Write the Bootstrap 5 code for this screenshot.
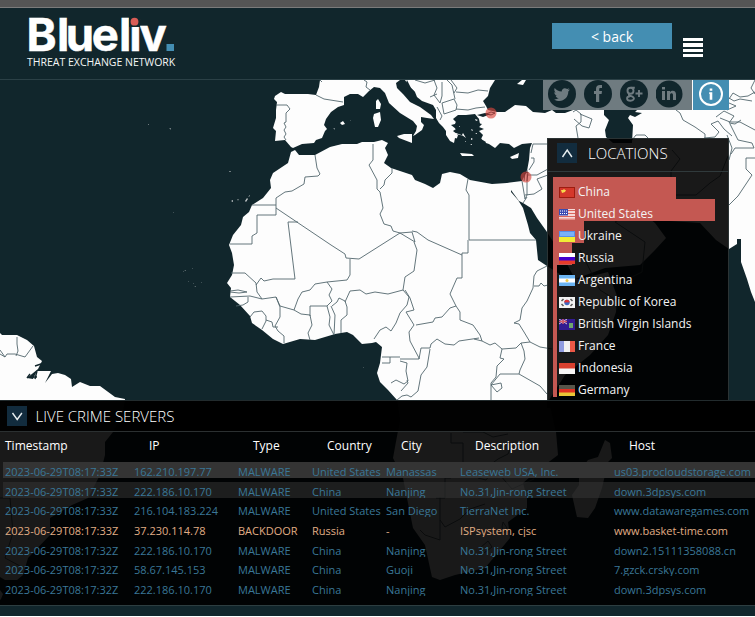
<!DOCTYPE html>
<html lang="en">
<head>
<meta charset="utf-8">
<title>Blueliv - Threat Exchange Network</title>
<meta name="viewport" content="width=device-width, initial-scale=1">
<link href="https://cdn.jsdelivr.net/npm/bootstrap@5.3.0/dist/css/bootstrap.min.css" rel="stylesheet">
<style>
body{font-family:"Open Sans","Noto Sans",sans-serif;background:#fff;color:#fff;overflow:hidden;line-height:1}
.page{height:616px;background:#11262c}
.topline{height:8px;background:#555;border-bottom:1px solid #7b7b7b}
.site-head{height:72px;border-bottom:1px solid #2b4046;padding-left:27px}
.logo-block{padding-top:7px;width:150px}
.logo-block svg{overflow:visible}
.tagline{font-size:10.5px;line-height:13px;white-space:nowrap;margin-top:1px;color:#f4f6f6}
.back-btn{width:120px;height:26px;margin-top:15px;background:#448eb2;color:#fff;font-size:14px;line-height:25px;border-radius:0;padding:0;border:0}
.burger{width:20px;margin:30px 52px 0 11px;gap:2px}
.burger span{height:3.3px;background:#fff}
.stage{height:526px;overflow:hidden;border-bottom:1px solid #2d3e41}
.world{left:0;top:0}
.share{left:543px;top:0;height:30px}
.share-set{width:149px;background:#6f7b80;padding-left:5px;gap:8px}
.share-info{width:36px;margin-left:1px;background:#448eb2}
.loc-panel{left:547px;top:58px;width:182px;height:270px;background:rgba(0,0,0,.9);border:1px solid #2b3334}
.loc-head{height:33px;border-bottom:1px solid #303a3c;padding-left:9px}
.fold{width:20px;height:20px;background:#122c3e}
.panel-title{font-size:15px;font-weight:300;white-space:nowrap}
.loc-head .panel-title{margin:7px 0 0 11px}
.live-head .panel-title{margin-left:8.5px}
.loc-list{padding:5px 0 0 5px}
.loc-row{height:22px;position:relative}
.loc-bar{position:absolute;left:0;top:0;height:22px;background:#c45852}
.loc-text{position:relative;height:22px;padding-left:6px;gap:3px;font-size:12px;white-space:nowrap;padding-top:6px;color:#f4f4f4}
.loc-text svg{margin-top:4px}
.loc-text span{line-height:17px}
.live{left:0;top:320px;width:100%;height:205px;background:rgba(0,0,0,.9);border-top:1px solid #222b2d}
.live-head{height:31px;border-bottom:1px solid #2b3031;background:rgba(0,0,0,.92);padding-left:7px}
.cols{display:grid;grid-template-columns:129px 104px 74px 74px 74px 154px 1fr;padding-left:5px;white-space:nowrap}
.live-cols{height:30px;font-size:12px;line-height:28px}
.live-cols span:not(:first-child){padding-left:15px}
.feed{gap:3.7px}
.feed .cols{height:16px;margin-left:3px;padding-left:2px;font-size:11px;line-height:20px;overflow:hidden;color:#3a7797}
.feed .fresh{background:#343434}
.feed .recent{background:rgba(52,52,52,.55)}
.feed .backdoor{color:#e0ad84}
</style>
<script src="https://cdn.jsdelivr.net/npm/bootstrap@5.3.0/dist/js/bootstrap.bundle.min.js"></script>
</head>
<body>
<div class="page">
<div class="topline"></div>
<header class="site-head d-flex align-items-start">
  <div class="logo-block">
    <svg class="d-block" width="150" height="40" viewBox="27 15 150 40">
      <text y="51" x="26.600 57 65.800 91.700 119 129.300 139.400" font-family="Inter,sans-serif" font-weight="700" font-size="45.500" fill="#fff" stroke="#fff" stroke-width=".5">Blueliv</text>
      <rect x="129" y="14" width="11" height="13" fill="#11262c"/>
      <circle cx="134.500" cy="21.700" r="3.900" fill="#d85c56"/>
      <rect x="166.500" y="44" width="7.500" height="7" fill="#448eb2"/>
    </svg>
    <div class="tagline">THREAT EXCHANGE NETWORK</div>
  </div>
  <button class="btn back-btn ms-auto">&lt; back</button>
  <div class="burger d-flex flex-column"><span></span><span></span><span></span><span></span></div>
</header>
<main class="stage position-relative">
  <svg class="world position-absolute" width="755" height="526" viewBox="0 80 755 526">
    <g fill="#fdfdfd">
      <!-- Europe, Asia and Africa -->
      <path d="M320 80L319 87 316 95 308 94 295 94 285 94 281 92 275 96 274 99 277 102 276 110 276 118 273 128 276 131 275 141 285 140 291 147 293 148 302 144 314 143 316 140 322 138 325 131 327 129 324 125 326 119 331 112 338 107 344 105 344 97 350 94 358 94 363 97 369 91 374 87 380 88 385 93 389 103 400 113 413 121 417 126 416 131 413 136 415 135 422 130 424 125 421 122 421 117 427 118 434 119 431 115 420 107 410 102 403 94 397 88 396 83 400 80H405L409 86 415 92 417 97 422 101 433 105 436 110 436 118 439 123 443 127 446 131 446 135 450 141 454 143 455 138 459 139 460 134 455 128 456 122 453 119 458 115 466 115 475 114 479 119 480 124 478 130 480 136 483 142 489 144 495 148 500 143 509 144 514 148 522 144 532 143 530 148 529 160 527 171 522 181 507 183 492 184 470 180 460 174 450 172 442 174 440 183 433 188 425 184 415 180 412 175 400 171 391 168 384 163 388 155 385 148 388 143 382 140 374 142 362 142 357 144 342 144 330 147 315 155 299 155 295 150 291 152 288 163 273 173 270 180 271 188 263 198 252 205 249 212 243 217 241 225 233 235 229 245 232 253 234 265 232 275 227 283 231 288 230 297 240 305 250 316 252 323 262 330 273 339 283 344 300 339 315 340 335 334 347 332 353 335 362 344 372 343 376 342 382 347 380 363 377 373 380 382 388 390 397 400 400 420 393 458 403 478 413 528 425 545 430 568 432 577 440 580 455 575 485 568 500 550 510 538 508 522 527 508 527 498 523 483 538 470 558 455 556 432 549 400 565 375 590 355 608 335 616 312 617 296 608 272 580 279 566 278 547 266 538 260 536 240 530 233 528 225 523 208 518 200 511 192 511 190 519 201 523 203 531 208 537 218 547 232 566 262 575 279 605 268 640 265 655 250 666 238 655 223 646 216 632 216 615 222 625 207 655 220 700 223 716 240 729 249 737 244 737 239 741 239 741 262 747 279 751 292 755 302V80Z"/>
      <path d="M376 101L378 99 381 104 380 109 376 109ZM374 114L380 112 381 120 378 127 375 127 373 118ZM397 136L404 134 412 134 412 143 399 138ZM460 153L472 154 474 156 462 156ZM510 157L519 153 518 158 512 159ZM340 123L343 121 345 124 342 125Z"/>
      <!-- South America -->
      <path d="M0 333L2 335 17 335 27 340 34 346 37 357 42 361 38 369 27 378 33 379 37 371 51 371 45 383 52 374 58 373 65 375 71 379 72 387 80 382 90 386 100 386 115 397 125 399 123 415 113 432 105 442 105 455 100 475 88 498 72 505 50 518 50 535 28 558 23 575 17 580 5 580 0 577Z"/>
      <!-- Madagascar -->
      <path d="M605 440L610 443 612 458 608 462 602 488 595 508 588 518 577 517 572 495 579 485 579 472 588 460 598 457Z"/>
      <path d="M0 590l3 4-2 5-1 1z"/>
      <path d="M231 201l2-1v2zM245 201l2-3 1 1-2 3zM248 197l2-2v1z" opacity=".75"/>
      <path d="M192 268h1v1zM183 271h1v1zM188 281l1 1h-1zM193 283h1v1zM173 212h1v1zM184 270h2v1zM194 286h2v1zM201 282h1v1zM363 367h1v1zM237 199l2 0-1 2zM229 171l2 0v1h-2zM333 128h2v2zM350 120h1v1zM169 128l2 0 0 2zM148 124h1v1h-1z" opacity=".4"/>
    </g>
    <g fill="#11262c">
      <path d="M495 80H545L600 80V100L565 113 556 113 552 110 545 113 533 112 526 106 515 105 505 112 497 112 488 110 486 106 483 101 488 96 490 88Z"/>
      <path d="M477 115l8-2 6 1-8 3zM604 109H638L635 112 642 113 635 117 630 115 628 118 633 125 632 143 613 143 606 137 605 130 609 120 604 115Z"/>
      <path d="M407 80l4 8 4 4-3-1-6-8zM513 80l6 0 3 3-5 2z"/>
      <path d="M458 117l6-2 2 3 3-3 6 2 4 2-1 4 4 1-3 3 5 2-5 2 4 4-2 4 5 3-2 4-10 6-14-3-4-8 2-6-5-4 3-2-5-4 4-1z"/>
    </g>
    <path d="M517 84l5-4h4l-3 5zM447 132l9 1 8 3-8-2zM463 133l3 5-4-3zM475 119l3 1-2 1zM471 129l2 1-1 1zM471 138l2 1-2 1zM459 126h1v1zM470 144h2v1zM465 141h1v1zM475 133h2v1z" fill="#fdfdfd"/>
    <!-- Borders -->
    <g fill="none" stroke="#52676d" stroke-width=".9" stroke-linejoin="round">
      <path d="M316 95L324 99 343 102M276 105L287 105 290 109 286 113 286 122 284 123 286 127 284 130 286 134 284 137 286 140M364 80l3 2-1 5 4 3M320 80l2 2"/>
      <path d="M315 155L317 168 320 174 318 176 305 177 304 184 292 191 285 192 276 198 276 215 257 215 257 233 252 236 252 244 230 244M252 205H276M276 208L331 245M331 245L345 254 346 258 359 259 400 233 415 242 412 232 400 233 393 231 391 226 384 224 380 214 383 208 380 192 377 189 377 180 369 165 373 160 373 144M392 168V173L385 180 384 185 380 189"/>
      <path d="M288 222H298M288 222L295 279 273 279M231 273L245 273 256 283 257 292 262 299 276 297 280 306 294 310 298 299 302 292 310 290 315 284 327 282 347 280 350 275 350 259M273 279L264 281 261 278 256 285M230 297L250 296 262 299M230 291l8-1 9 2-8 1-9-1M248 297l0 5-5 3-7 1M276 297l4 10 0 10-5 9 3 5 6 5V343M250 317L254 312 262 311 266 316 266 321 262 329M266 320l6 2 1 5 5 0M294 310L301 314 310 315 312 325 308 333 310 340M310 316V306H327L332 301 329 295 332 289 327 282M327 306L330 317 329 325 334 335M331 306L335 315 334 335M332 306l5-4 2-4 6 3 2 6 0 8-6 5V333"/>
      <path d="M345 302L350 291 360 290 366 294 375 292 388 294 403 290 405 277 414 271 417 250 414 242M405 290l5 8 4 12-8 2 8 13-5 7 1 9 9 17V359H400M382 357H400M390 357V363H382M403 290l6 7-2 8-7 8-4 10-5 8-5-4-6 3-6 9M400 361l7 2-1 8 2 10-4 3-8-4-5 3M407 380l1 3-7 8M397 400l5-4 5-1 4 2 7-6 3-16 6-8 3-18"/>
      <path d="M416 325L433 322 435 318 442 317 450 308 456 306 450 294 457 278 462 278V253H468V240"/>
      <path d="M419 359l2-11 9 0 1-4 6-5 8 5 9 1 5-4 20-3M456 306L460 312 460 320 473 325 480 335 482 341 490 345 495 343 502 349 500 358 504 359 497 366 496 377 491 383 491 400M482 341l-8-2M412 231L417 232 428 240 462 255M468 179L466 190 469 195V240H536M502 349L516 348 521 343 524 351 525 359 520 370 519 374H500L491 385 501 383 502 388 497 392 491 385M519 374L540 386 547 394M521 343L530 342 540 347 552 349M530 342L524 332 519 324 514 323 520 320 522 308 527 301 533 288 534 276 537 271 547 266M534 286l5 0 2-3 3 3 4-1"/>
      <path d="M434 80l3 8-3 7 6 8 2-7 0-14M442 103l12-4 3 6-1 5-12 4-2-11M455 99l-3-14-5-5M456 92l12 1 10-3 10 1M456 109l12 1 8-2 9-1M430 97l7-3M415 80l10 3 10-3M451 80l6 8-3 5M437 107l5 9-2 4"/>
      <path d="M531 153l2-9h15M529 170l5-8 0-4-3 0M522 181l3 18 2-4 0-25M525 195l9-1 8-5-5-10 11-4M527 175l10 0 11-6M523 203l4-6M573 112l3-2 5 4 0 8-5 4 2 12M580 114l12 5-3 9-7-2-8-7M570 106l5-6 5 5M676 110l4 3 3 7 12 7 10 7 0 4M704 138l11-1 4-5-8-8 7-3 6 8 8 7M632 140l4-5 9 0 3 3M720 118l10 4 10 0 15 8M729 98l5 3 6-2 12 2M716 117l8-6 10 5-5 7 6 1 6-4M730 124l8 16 14 3 2 5-19 0-4 6M755 158H746V169L752 175 738 196 729 205M727 110l9-4-7-3M727 135l5 13-3 12M640 134M672 150l8 9-9 12 0 24 25 0 14-12 10-7 8-20M755 80l-4 8 4 6M729 99l4-6 7 4 8-1 7-4"/>
      <path d="M17 337l0 7 1 7-2 5M0 350l5 7 2-3 8 0 10 3 8-11M5 357l-5-3"/>
      <path stroke="#11262c" d="M35 366l6-2 3 6M33 377l4 0M30 374l-3 4M37 371l-2 8" stroke-width="1.400"/>
      <path d="M451 433v10h12v25h-12v10h-6v20l-9 0M463 432h20l10 5 15-3M463 468l15 6 20-15 10-5 5-12M478 478l8 2 8-10M440 497l0 43-15-5-5-5M440 520l5 7 15-8 10-10 15-5M503 522l4 6-3 5-2-6zM480 548l8-7 4 6-8 6zM500 475l12 14 22-10M0 498h10l3 35-8 25 15 8M615 222l30 20-3 30-20 10M580 250l20 40 16 10"/>
    </g>
    <circle cx="491" cy="113" r="5.500" fill="#d9463d" fill-opacity=".65"/>
    <circle cx="526" cy="177" r="5.500" fill="#d9463d" fill-opacity=".65"/>
    <path d="M486 114l5-2 4 1-4 2zM524 181l1-8 3-1-1 9" fill="none" stroke="#7c2d2c" stroke-width=".8"/>
  </svg>

  <div class="share position-absolute d-flex">
    <div class="share-set d-flex align-items-start">
      <svg width="28" height="28" viewBox="0 0 28 28"><circle cx="14" cy="14" r="14" fill="#11262c"/><path fill="#6f7b80" d="M22 9.500l-2 .6 1.300-1.800-2.200.8c-2-2-5.500-.8-5.400 2.500-3 0-5.200-1.600-7-3.600-.9 1.700-.3 3.600 1.100 4.600l-1.500-.4c0 1.700 1.200 3 2.800 3.500l-1.500 0c.4 1.300 1.700 2.300 3.200 2.400-1.400 1-3 1.400-4.700 1.300 6.800 3.900 14.200-.2 14.200-7.800z"/></svg>
      <svg width="28" height="28" viewBox="0 0 28 28"><circle cx="14" cy="14" r="14" fill="#11262c"/><path fill="#6f7b80" d="M12 22v-8h-2v-3h2V9c0-2.700 1.300-4 4-4h2v3h-1.500c-1 0-1.300.4-1.300 1.300V11H18l-.4 3h-2.400v8z"/></svg>
      <svg width="28" height="28" viewBox="0 0 28 28"><circle cx="14" cy="14" r="14" fill="#11262c"/><g fill="none" stroke="#6f7b80" stroke-width="1.900"><circle cx="10.500" cy="10.700" r="3"/><path d="M14.800 7.700h-4M9.500 13.700c-1.500 1.500 0 2 1.800 2.500 4.500 1.500 2.500 4.500-.8 4.500-4.500 0-4.500-4-.5-4.500M15.500 13.500h7M19 10v7"/></g></svg>
      <svg width="28" height="28" viewBox="0 0 28 28"><circle cx="13" cy="14" r="13.500" fill="#11262c"/><path fill="#6f7b80" d="M6 11h3v9H6zM6 7h3v2.500H6zM11 11h3v1.300c1.800-2.500 6-1.800 6 2V20h-3v-5c0-2.300-3-2.200-3 0v5h-3z"/></svg>
    </div>
    <div class="share-info d-flex justify-content-center">
      <svg width="26" height="28" viewBox="0 0 26 28"><circle cx="13" cy="14" r="11" fill="none" stroke="#fff" stroke-width="2"/><path fill="#fff" d="M11.700 8.500h2.600v2.300h-2.600zM11.200 12.300h3.100v7.500h-2.600v-5.700h-.5z"/></svg>
    </div>
  </div>

  <section class="loc-panel position-absolute">
    <div class="loc-head d-flex align-items-start">
      <span class="fold d-inline-flex mt-1 pt-1"><svg width="20" height="14" viewBox="0 0 20 14"><path d="M5.500 10l4.700-7 4.700 7" fill="none" stroke="#e8eef0" stroke-width="1.400"/></svg></span>
      <span class="panel-title">LOCATIONS</span>
    </div>
    <div class="loc-list">
      <div class="loc-row"><div class="loc-bar" style="width:123px"></div><div class="loc-text d-flex"><svg width="16" height="11"><rect width="16" height="11" fill="#9e1c10"/><rect x="1" y="1" width="14" height="9" fill="#d5382b"/><path d="M2 3h2l1-1 1 1h1l-1 2-3 1z" fill="#f7d94c"/></svg><span>China</span></div></div>
      <div class="loc-row"><div class="loc-bar" style="width:162px"></div><div class="loc-text d-flex"><svg width="16" height="11"><rect width="16" height="11" fill="#fff"/><path d="M0 1.500h16M0 4.500h16M0 7.500h16M0 10.200h16" stroke="#d9655b" stroke-width="1.300"/><rect width="9" height="6.500" fill="#3a4bb2"/><path d="M1 2h8M1 4.500h8" stroke="#fff" stroke-dasharray="1 1"/></svg><span>United States</span></div></div>
      <div class="loc-row"><div class="loc-bar" style="width:31px"></div><div class="loc-text d-flex"><svg width="16" height="11"><rect width="16" height="11" fill="#568eea"/><rect x="1" y="1" width="14" height="4" fill="#79b1fa"/><rect y="6" width="16" height="5" fill="#f1ec36"/></svg><span>Ukraine</span></div></div>
      <div class="loc-row"><div class="loc-bar" style="width:19px"></div><div class="loc-text d-flex"><svg width="16" height="11"><rect width="16" height="4" fill="#fff"/><rect y="4" width="16" height="4" fill="#4400ce"/><rect y="7.500" width="16" height="3.500" fill="#e63b2b"/></svg><span>Russia</span></div></div>
      <div class="loc-row"><div class="loc-bar" style="width:4px"></div><div class="loc-text d-flex"><svg width="16" height="11"><rect width="16" height="11" fill="#6bb4f2"/><rect y="3.500" width="16" height="4" fill="#fff"/><circle cx="8" cy="5.500" r="1.500" fill="#f1cb48"/></svg><span>Argentina</span></div></div>
      <div class="loc-row"><div class="loc-bar" style="width:4px"></div><div class="loc-text d-flex"><svg width="16" height="11"><rect width="16" height="11" fill="#f3f3f3"/><circle cx="8" cy="5.500" r="2.700" fill="#3f68c2"/><path d="M5.300 5.500a2.700 2.700 0 0 1 5.400-.3z" fill="#df3333"/><path d="M2.500 4l2-2M2.500 7l2 2M11.500 2l2 2M11.500 9l2-2" stroke="#555" stroke-width="1.500"/></svg><span>Republic of Korea</span></div></div>
      <div class="loc-row"><div class="loc-bar" style="width:4px"></div><div class="loc-text d-flex"><svg width="16" height="11"><rect width="16" height="11" fill="#331b91"/><path d="M0 0l8 5M8 0L0 5" stroke="#d6c3dc"/><path d="M4 0v5M0 2.500h8" stroke="#d45e6b" stroke-width="1.500"/><rect x="10" y="4" width="4" height="5" fill="#6fa66e"/></svg><span>British Virgin Islands</span></div></div>
      <div class="loc-row"><div class="loc-bar" style="width:4px"></div><div class="loc-text d-flex"><svg width="16" height="11"><rect width="16" height="11" fill="#f0f0f0"/><rect width="5" height="11" fill="#8f9be0"/><rect x="11" width="5" height="11" fill="#ec5847"/></svg><span>France</span></div></div>
      <div class="loc-row"><div class="loc-bar" style="width:4px"></div><div class="loc-text d-flex"><svg width="16" height="11"><rect width="16" height="11" fill="#f5f5f5"/><rect width="16" height="5.500" fill="#d9402f"/></svg><span>Indonesia</span></div></div>
      <div class="loc-row"><div class="loc-bar" style="width:4px"></div><div class="loc-text d-flex"><svg width="16" height="11"><rect width="16" height="11" fill="#56554a"/><rect y="4" width="16" height="4" fill="#e03022"/><rect y="7.500" width="16" height="3.500" fill="#e9c637"/></svg><span>Germany</span></div></div>
    </div>
  </section>

  <section class="live position-absolute">
    <div class="live-head d-flex align-items-center">
      <span class="fold d-inline-flex pt-1"><svg width="20" height="14" viewBox="0 0 20 14"><path d="M5.500 3l4.700 6.500 4.700-6.500" fill="none" stroke="#e8eef0" stroke-width="1.400"/></svg></span>
      <span class="panel-title">LIVE CRIME SERVERS</span>
    </div>
    <div class="cols live-cols"><span>Timestamp</span><span>IP</span><span>Type</span><span>Country</span><span>City</span><span>Description</span><span>Host</span></div>
    <div class="feed d-flex flex-column">
      <div class="cols fresh"><span>2023-06-29T08:17:33Z</span><span>162.210.197.77</span><span>MALWARE</span><span>United States</span><span>Manassas</span><span>Leaseweb USA, Inc.</span><span>us03.procloudstorage.com</span></div>
      <div class="cols recent"><span>2023-06-29T08:17:33Z</span><span>222.186.10.170</span><span>MALWARE</span><span>China</span><span>Nanjing</span><span>No.31,Jin-rong Street</span><span>down.3dpsys.com</span></div>
      <div class="cols"><span>2023-06-29T08:17:33Z</span><span>216.104.183.224</span><span>MALWARE</span><span>United States</span><span>San Diego</span><span>TierraNet Inc.</span><span>www.datawaregames.com</span></div>
      <div class="cols backdoor"><span>2023-06-29T08:17:33Z</span><span>37.230.114.78</span><span>BACKDOOR</span><span>Russia</span><span>-</span><span>ISPsystem, cjsc</span><span>www.basket-time.com</span></div>
      <div class="cols"><span>2023-06-29T08:17:32Z</span><span>222.186.10.170</span><span>MALWARE</span><span>China</span><span>Nanjing</span><span>No.31,Jin-rong Street</span><span>down2.15111358088.cn</span></div>
      <div class="cols"><span>2023-06-29T08:17:32Z</span><span>58.67.145.153</span><span>MALWARE</span><span>China</span><span>Guoji</span><span>No.31,Jin-rong Street</span><span>7.gzck.crsky.com</span></div>
      <div class="cols"><span>2023-06-29T08:17:32Z</span><span>222.186.10.170</span><span>MALWARE</span><span>China</span><span>Nanjing</span><span>No.31,Jin-rong Street</span><span>down.3dpsys.com</span></div>
    </div>
  </section>
</main>
</div>
</body>
</html>
